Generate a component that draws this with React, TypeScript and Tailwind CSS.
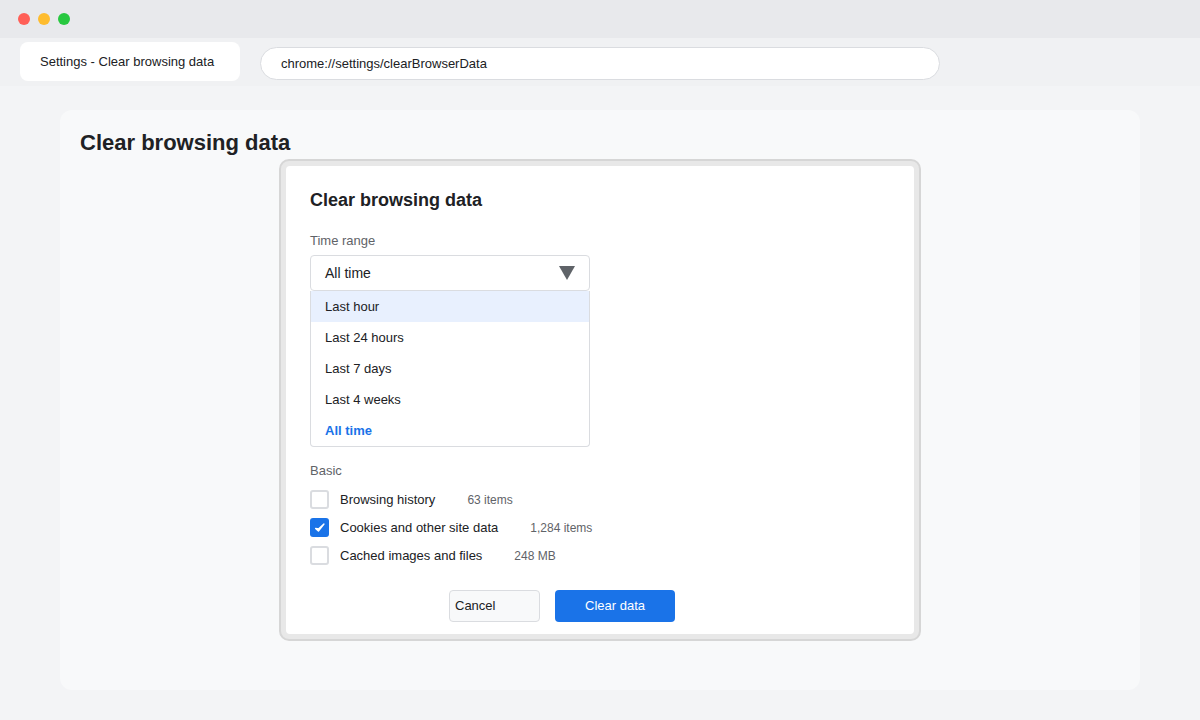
import { useState } from "react"

const ranges = ["Last hour", "Last 24 hours", "Last 7 days", "Last 4 weeks", "All time"]

const dataTypes = [
    { label: "Browsing history", count: "63 items", checked: false },
    { label: "Cookies and other site data", count: "1,284 items", checked: true },
    { label: "Cached images and files", count: "248 MB", checked: false },
]

function CheckBox({ checked }: { checked: boolean }) {
    if (checked) {
        return (
            <span className="flex h-[19px] w-[19px] items-center justify-center rounded-[3px] bg-[#1a73e8]">
                <svg viewBox="0 0 16 16" className="h-[14px] w-[14px]">
                    <path d="M3 8.5 L6.2 11.5 L12.5 3.5 L6.6 9 Z" fill="white" stroke="white" strokeWidth="1.6" strokeLinejoin="round" />
                </svg>
            </span>
        )
    }
    return <span className="h-[19px] w-[19px] rounded-[3px] border-2 border-[#dadce0] bg-white" />
}

export default function App() {
    const [selected] = useState("All time")
    const [items, setItems] = useState(dataTypes)

    return (
        <div className="flex h-[720px] w-[1200px] flex-col bg-[#f3f4f6] font-['Liberation_Sans',Arial,sans-serif] text-[#202124]">
            {/* window chrome */}
            <div className="flex h-[38px] items-center gap-[8px] bg-[#e8e9ec] px-[18px]">
                <span className="h-[12px] w-[12px] rounded-full bg-[#ff5f57]" />
                <span className="h-[12px] w-[12px] rounded-full bg-[#febc2e]" />
                <span className="h-[12px] w-[12px] rounded-full bg-[#28c840]" />
            </div>
            <div className="flex h-[48px] items-start gap-5 bg-[#f0f1f3] px-5 pt-[4px]">
                <div className="flex h-[39px] w-[220px] items-center rounded-lg bg-white px-5 text-[13px] text-[#202124]">
                    Settings - Clear browsing data
                </div>
                <div className="mt-[5px] flex h-[33px] w-[680px] items-center rounded-full border border-[#dadce0] bg-white px-5 text-[13px] text-[#202124]">
                    chrome://settings/clearBrowserData
                </div>
            </div>

            {/* page */}
            <div className="flex-1 px-[60px] pt-[24px]">
                <div className="h-[580px] rounded-xl bg-[#f8f9fa] px-5 pt-[19px]">
                    <h1 className="text-[22px] font-bold leading-[28px] text-[#202124]">Clear browsing data</h1>

                    <div className="mx-auto mt-[2px] h-[482px] w-[642px] rounded-[10px] border-2 border-[#d6d6d6] bg-[#e8e8e8] p-[5px]">
                        <div className="h-full rounded-[4px] bg-white px-6 pt-[22px]">
                            <h2 className="text-[18px] font-bold leading-[24px]">Clear browsing data</h2>

                            <div className="mt-[21px] text-[13px] leading-[16px] text-[#5f6368]">Time range</div>
                            <div className="mt-[6px] w-[280px]">
                                <div className="flex h-[36px] items-center justify-between rounded-[4px] border border-[#dadce0] bg-white pl-[14px] pr-[14px] text-[14px]">
                                    <span>{selected}</span>
                                    <svg viewBox="0 0 16 16" className="h-[16px] w-[16px]">
                                        <path d="M0 1 H16 L8 15 Z" fill="#5f6368" />
                                    </svg>
                                </div>
                                <ul className="overflow-hidden rounded-b-[4px] border border-t-0 border-[#dadce0] bg-white text-[13px]">
                                    {ranges.map((r, i) => (
                                        <li
                                            key={r}
                                            className={
                                                i === 0
                                                    ? "flex h-[31px] items-center bg-[#e8f0fe] px-[14px]"
                                                    : r === selected
                                                      ? "flex h-[31px] items-center px-[14px] font-bold text-[#1a73e8]"
                                                      : "flex h-[31px] items-center px-[14px]"
                                            }
                                        >
                                            {r}
                                        </li>
                                    ))}
                                </ul>
                            </div>

                            <div className="mt-[16px] text-[13px] leading-[16px] text-[#5f6368]">Basic</div>
                            <div className="mt-[11px] flex flex-col gap-[9px]">
                                {items.map((it, idx) => (
                                    <label
                                        key={it.label}
                                        className="flex h-[19px] cursor-pointer items-center"
                                        onClick={() =>
                                            setItems((prev) => prev.map((p, j) => (j === idx ? { ...p, checked: !p.checked } : p)))
                                        }
                                    >
                                        <CheckBox checked={it.checked} />
                                        <span className="ml-[11px] text-[13px] text-[#202124]">{it.label}</span>
                                        <span className="ml-[32px] text-[12px] text-[#5f6368]">{it.count}</span>
                                    </label>
                                ))}
                            </div>

                            <div className="mt-[25px] flex gap-[15px] pl-[139px]">
                                <button className="h-[32px] w-[91px] rounded-[4px] border border-[#dadce0] bg-[#f8f9fa] px-[5px] text-left text-[13px] text-[#202124]">
                                    Cancel
                                </button>
                                <button className="h-[32px] w-[120px] rounded-[4px] bg-[#1a73e8] text-[13px] text-white">
                                    Clear data
                                </button>
                            </div>
                        </div>
                    </div>
                </div>
            </div>
        </div>
    )
}
